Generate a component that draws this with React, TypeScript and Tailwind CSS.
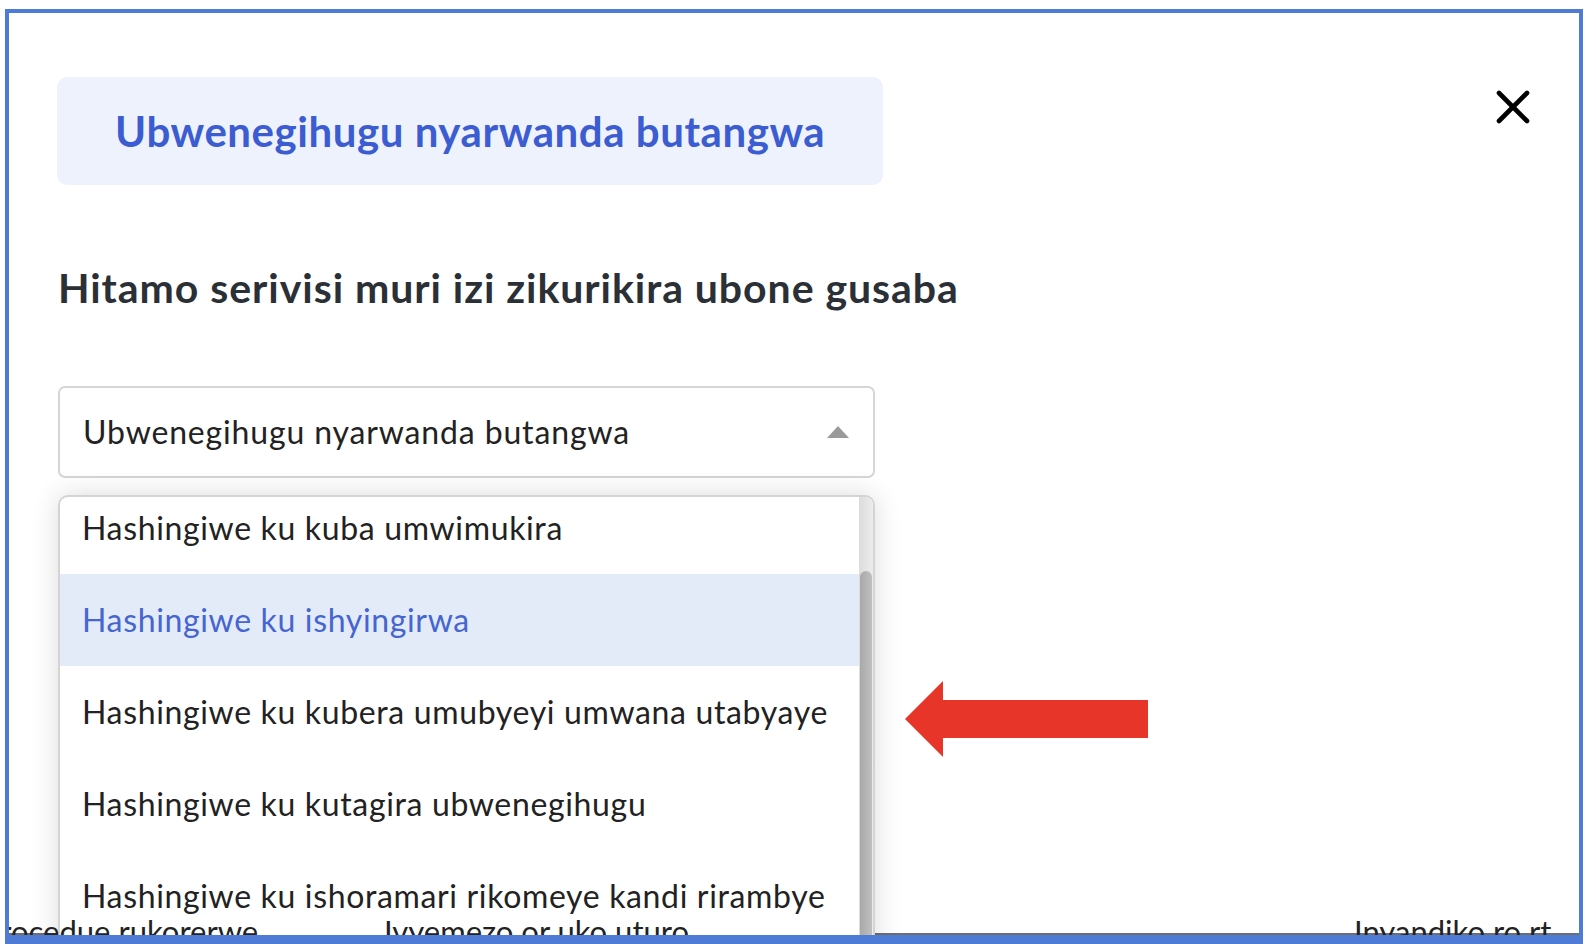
import React from 'react';

const options = [
  'Hashingiwe ku kuba umwimukira',
  'Hashingiwe ku ishyingirwa',
  'Hashingiwe ku kubera umubyeyi umwana utabyaye',
  'Hashingiwe ku kutagira ubwenegihugu',
  'Hashingiwe ku ishoramari rikomeye kandi rirambye',
];

const font = { fontFamily: 'Lato, "Noto Sans", sans-serif' };

function CloseIcon() {
  return (
    <svg width="34" height="34" viewBox="0 0 34 34" fill="none" stroke="#000" strokeWidth="4.6" strokeLinecap="round">
      <line x1="3" y1="3" x2="31" y2="31" />
      <line x1="31" y1="3" x2="3" y2="31" />
    </svg>
  );
}

function RedArrow() {
  return (
    <svg width="244" height="78" viewBox="0 0 244 78">
      <polygon points="0,38 38,0 38,19 243,19 243,57 38,57 38,76" fill="#e8352a" />
    </svg>
  );
}

export default function App() {
  const selected = 1;
  return (
    <div className="w-[1592px] h-[944px] bg-white pl-[5px] pt-[9px] pr-[9px] overflow-hidden" style={font}>
      <div className="relative w-[1578px] h-[935px] border-4 border-b-[9px] border-[#4d7bd6] overflow-hidden">
        <div className="relative h-full border-b-2 border-[#6e6e6e] pl-[48px] pr-[49px] pt-[64px]">
          {/* header */}
          <div className="flex items-start justify-between">
            <div className="w-[826px] h-[108px] rounded-[10px] bg-[#eef2fc] pl-[58px] flex items-center">
              <h1 className="text-[42px] font-bold text-[#3c5cd2] tracking-[0.55px] leading-none">
                Ubwenegihugu nyarwanda butangwa
              </h1>
            </div>
            <button className="mt-[13px]" aria-label="Close">
              <CloseIcon />
            </button>
          </div>

          <h2 className="mt-[79px] pl-[1px] text-[41px] leading-[48px] font-bold tracking-[0.95px] text-[#2b2f36]">
            Hitamo serivisi muri izi zikurikira ubone gusaba
          </h2>

          {/* select */}
          <div className="mt-[74px] ml-[1px] w-[817px] h-[92px] rounded-[7px] border-2 border-[#d6d6d6] bg-white flex items-center justify-between pl-[23px] pr-[24px]">
            <span className="text-[32px] tracking-[0.85px] text-[#222]">Ubwenegihugu nyarwanda butangwa</span>
            <span className="w-0 h-0 border-l-[11px] border-r-[11px] border-b-[12px] border-l-transparent border-r-transparent border-b-[#9a9a9a]" />
          </div>

          {/* dropdown */}
          <div className="flex items-center">
            <div className="relative mt-[17px] ml-[1px] w-[817px] h-[460px] rounded-t-[10px] border-2 border-[#d4d4d4] border-b-0 bg-white shadow-[0_0_28px_rgba(0,0,0,0.14)] overflow-hidden flex">
              <div className="flex-1 -mt-[15px]">
                {options.map((o, i) => (
                  <div
                    key={o}
                    className={`h-[92px] flex items-center pl-[22px] text-[32px] tracking-[0.65px] ${i === selected ? 'bg-[#e4ebf8] text-[#4565d0]' : 'text-[#222]'}`}
                  >
                    {o}
                  </div>
                ))}
              </div>
              <div className="w-[14px] bg-gradient-to-r from-[#dcdcdc] to-[#ececec] pt-[74px] flex justify-center">
                <div className="w-[12px] h-full rounded-t-full bg-gradient-to-r from-[#a9a9a9] to-[#c0c0c0]" />
              </div>
            </div>
            <div className="ml-[30px] mt-[7px]">
              <RedArrow />
            </div>
          </div>

          {/* page text behind, peeking at the bottom edge */}
          <div className="absolute left-[-27px] right-0 top-[898px] flex text-[31px] leading-[40px] text-[#222] whitespace-nowrap z-10">
            <span className="w-[402px]">Procedue rukorerwe</span>
            <span className="w-[970px]">Ivyemezo or uko uturo</span>
            <span>Inyandiko ro rt</span>
          </div>
        </div>
      </div>
    </div>
  );
}
